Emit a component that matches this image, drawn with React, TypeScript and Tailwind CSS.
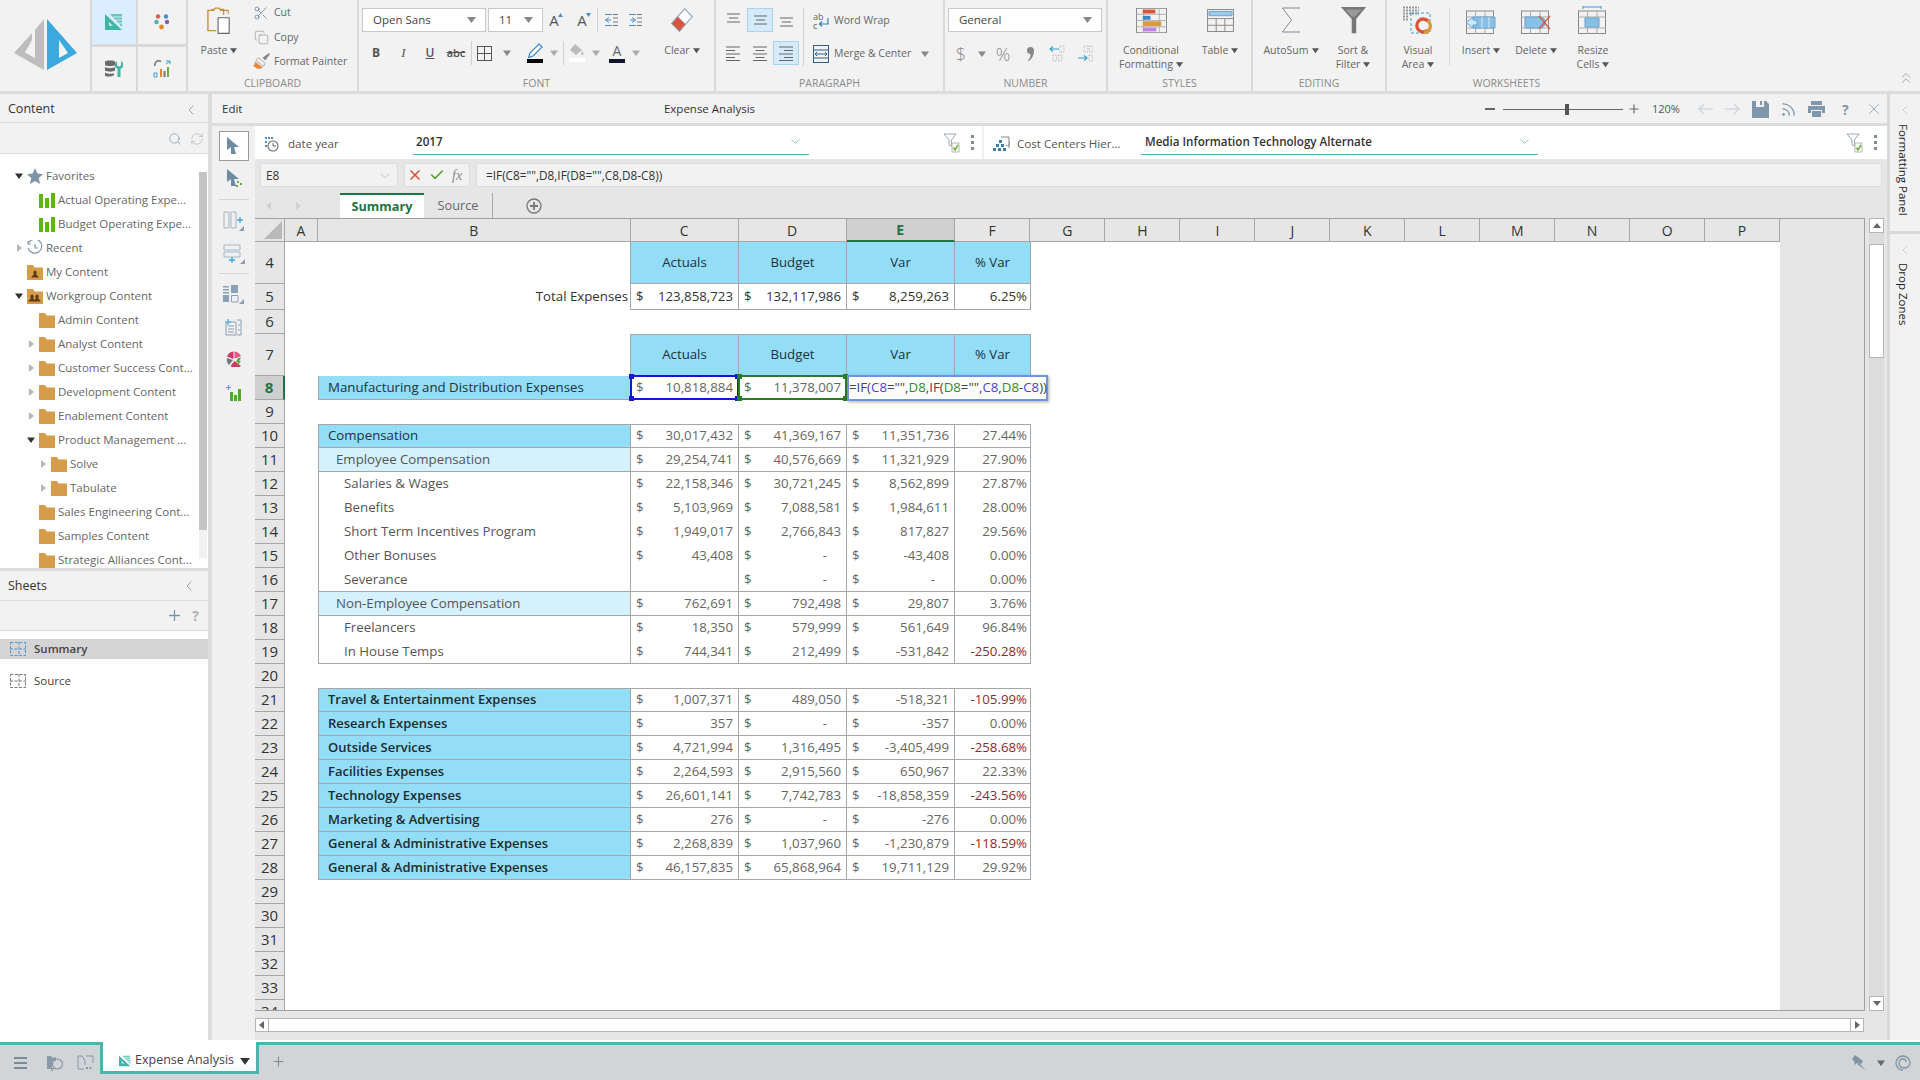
import { ReactNode } from 'react';
import { Check, ChevronDown, ChevronLeft, ChevronsUp, Copy, Plus, RefreshCw, Rss, Scissors, Search, X } from 'lucide-react';

// Tiny drawn icons, most of these don't exist in the icon packages
const Caret = ({ dir = 'down', c = 'text-[#666]', s = 8 }: { dir?: 'down' | 'right'; c?: string; s?: number }) => (
  <svg width={s} height={s} viewBox="0 0 8 8" className={`${c} fill-current`}>
    {dir === 'down' ? <path d="M0 1.5h8L4 7z" /> : <path d="M2 0l5 4-5 4z" />}
  </svg>
);

const Logo = () => (
  <svg width="90" height="91" viewBox="0 0 90 91">
    <path d="M44 19V70L14 53L32 33V40L25 52.5L35 58V30Z" fill="#bdbdbd" />
    <path fillRule="evenodd" d="M47 19L77 53L47 70ZM59 40V58L68 53Z" fill="#3aa9de" />
  </svg>
);

const TriangleRuler = ({ s = 18, bg = '#dbeeff' }: { s?: number; bg?: string }) => (
  <svg width={s} height={s} viewBox="0 0 18 18">
    <path d="M0 1L17 17H0Z" fill="#3fb5a5" />
    <path d="M5 1H17V14Z" fill="#3fb5a5" opacity=".75" />
    <path d="M4 12.5L4 9L8 13Z" fill={bg} />
    <path d="M8 4H17M10 7H17M13 10H17" stroke={bg} strokeWidth="1" />
  </svg>
);

const Dots = () => (
  <svg width="16" height="16" viewBox="0 0 16 16">
    <circle cx="4" cy="2.5" r="2.2" fill="#d9604c" />
    <circle cx="12" cy="2.5" r="2.2" fill="#4a90c8" />
    <circle cx="2.5" cy="8" r="2.2" fill="#4fb3a5" />
    <circle cx="13" cy="8" r="2.2" fill="#8a5bb8" />
    <circle cx="7.5" cy="13" r="2.4" fill="#e08a2c" />
  </svg>
);

const DataTool = () => (
  <svg width="18" height="18" viewBox="0 0 18 18">
    <path d="M0 1.5C0 0 10 0 10 1.5V5C10 6.5 0 6.5 0 5ZM0 7C2 8.5 8 8.5 10 7V10.500C8 12 2 12 0 10.500ZM0 12.500C2 14 6 14 9 13.500V15C7 17 0 17 0 15.500Z" fill="#6b6b6b" />
    <path d="M12 1V5.500L14 6.500L16 5.500V1L18 3V7L15.500 9V17H12.500V9L10 7V3Z" fill="#3fb5a5" />
  </svg>
);

const ReportTool = () => (
  <svg width="18" height="18" viewBox="0 0 18 18" fill="none">
    <path d="M8 1.500A4 4 0 0 0 2 6" stroke="#777" strokeWidth="1.600" />
    <path d="M13 1H17V4M13 4L17 1" stroke="#3a9fd0" strokeWidth="1" />
    <path d="M1 13H4V17H1Z" stroke="#3a9fd0" strokeWidth="1" />
    <path d="M7 9H9V17H7Z" fill="#e08a2c" />
    <path d="M10.500 11H12.500V17H10.500Z" fill="#777" />
    <path d="M14 7H16V17H14Z" fill="#6bb33a" />
  </svg>
);

const PasteIcon = () => (
  <svg width="24" height="27" viewBox="0 0 26 28" fill="none">
    <path d="M8 3H1V25H10" stroke="#c98e3f" strokeWidth="1.500" />
    <path d="M5 2H8L9 0.500H13L14 2H18V8" stroke="#c98e3f" strokeWidth="1.300" />
    <path d="M14 3H23V7" stroke="#c98e3f" strokeWidth="1.200" />
    <path d="M12 11H24V28H12Z" stroke="#666" strokeWidth="1.200" fill="#fff" />
  </svg>
);

const Brush = () => (
  <svg width="17" height="17" viewBox="0 0 18 18">
    <path d="M10 5L17 0L18 1L13 8Z" fill="#888" />
    <path d="M6 5L13 11L11 14L3 8Z" fill="#eee" stroke="#888" strokeWidth=".7" />
    <path d="M2 9L10 15C8 18 3 17 0 13C2 13 2 11 2 9Z" fill="#e08a3c" />
  </svg>
);

const AGrow = ({ up }: { up?: boolean }) => (
  <span className="relative text-[15px] text-[#555] leading-none font-medium">
    A
    <svg width="5" height="4" viewBox="0 0 5 4" className="absolute -right-[4px] top-0 fill-[#4a90c8]">
      {up ? <path d="M0 4L2.500 0L5 4Z" /> : <path d="M0 0H5L2.500 4Z" />}
    </svg>
  </span>
);

const IndentIcon = ({ left }: { left?: boolean }) => (
  <svg width="14" height="12" viewBox="0 0 14 12" fill="none" stroke="#4a90c8" strokeWidth="1">
    {left ? <path d="M5 3.500L1.500 6L5 8.500M1.500 6H7" /> : <path d="M4 3.500L7.500 6L4 8.500M2 6H7.500" />}
    <path d="M9 .5H14M9 4H14M9 8H14M9 11.500H14" stroke="#777" />
    <path d="M1 .5H8M1 11.500H8" stroke="#4a90c8" />
  </svg>
);

const BordersIcon = () => (
  <svg width="15" height="15" viewBox="0 0 15 15" fill="none" stroke="#555" strokeWidth="1">
    <rect x=".5" y=".5" width="14" height="14" />
    <path d="M7.500 0V15M0 7.500H15" />
  </svg>
);

const PenColor = () => (
  <svg width="17" height="20" viewBox="0 0 17 20">
    <path d="M12 1L15 4L6 13L1.500 14.500L3 10Z" fill="#fff" stroke="#3a86c8" strokeWidth="1.200" />
    <path d="M0 16H16V20H0Z" fill="#000" />
  </svg>
);

const FillColor = () => (
  <svg width="16" height="20" viewBox="0 0 16 20">
    <path d="M6 1L13 7L7 12L1 7Z" fill="#bbb" />
    <path d="M13 8C15 10 15 12 13.500 12C12 12 12 10 13 8Z" fill="#bbb" />
    <path d="M0 15H16V19H0Z" fill="#fff" />
  </svg>
);

const FontColor = () => (
  <span className="flex flex-col items-center leading-none">
    <span className="text-[14px] text-[#666]">A</span>
    <span className="w-[16px] h-[4px] bg-[#14142e] mt-[1px]" />
  </span>
);

const Eraser = () => (
  <svg width="24" height="24" viewBox="0 0 26 28">
    <path d="M16 1L25 10L10 27L1 18Z" fill="#fff" stroke="#8aa0b8" strokeWidth="1.200" />
    <path d="M8 10L17 19L10 27L1 18Z" fill="#d9553c" stroke="#8aa0b8" strokeWidth="1" />
  </svg>
);

const LinesIcon = ({ kind }: { kind: 'top' | 'mid' | 'bot' | 'left' | 'center' | 'right' }) => {
  const d = {
    top: 'M1 1H14M3 5H12M1 9H14',
    mid: 'M1 3H14M3 7H12M1 11H14',
    bot: 'M1 5H14M3 9H12M1 13H14',
    left: 'M0 1H14M0 4.500H9M0 8H14M0 11.500H9M0 14.500H14',
    center: 'M0 1H14M2.500 4.500H11.500M0 8H14M2.500 11.500H11.500M0 14.500H14',
    right: 'M0 1H14M5 4.500H14M0 8H14M5 11.500H14M0 14.500H14',
  }[kind];
  return (
    <svg width="15" height="15" viewBox="0 0 15 15" fill="none" stroke="#666" strokeWidth="1">
      <path d={d} />
    </svg>
  );
};

const WrapIcon = () => (
  <span className="relative w-[16px] h-[18px] block text-[9px] leading-[9px] text-[#666]">
    <span className="block w-[10px]">ab</span>
    <span className="block w-[6px]">c</span>
    <svg width="16" height="18" viewBox="0 0 16 18" className="absolute left-0 top-0">
      <path d="M15 6V12H7M9 9.500L6.500 12L9 14.500" fill="none" stroke="#2f7fb8" strokeWidth="1.200" />
    </svg>
  </span>
);

const MergeIcon = () => (
  <svg width="16" height="18" viewBox="0 0 16 18" fill="none" stroke="#2f5f8a" strokeWidth="1">
    <rect x=".5" y=".5" width="15" height="17" />
    <path d="M0 5H16M0 13H16M2 9H14M4 7L2 9L4 11M12 7L14 9L12 11" />
  </svg>
);

const DecIcon = ({ inc }: { inc?: boolean }) => (
  <svg width="16" height="18" viewBox="0 0 16 18" fill="none">
    <path d={inc ? 'M1 13H10M7 10.500L10 13L7 15.500' : 'M10 4H1M4 1.500L1 4L4 6.500'} stroke="#3a9fd0" strokeWidth="1.200" />
    <path d={inc ? 'M7 1H11V7H7ZM12.500 1H16V7H12.500ZM12 10H15.500V16H12Z' : 'M11 1H15V7H11ZM4 10H7.500V16H4ZM9.500 10H13V16H9.500Z'} stroke="#aaa" strokeWidth=".8" strokeDasharray="1 1" />
  </svg>
);

const CommaIcon = () => (
  <svg width="7" height="14" viewBox="0 0 7 14" className="fill-[#888]">
    <path d="M3.500 0A3.500 3.500 0 0 1 7 3.500C7 8 5 12 1.500 14L1 13C3 11.500 3.500 9.500 3.500 7A3.500 3.500 0 0 1 3.500 0Z" />
  </svg>
);

const CondFormat = () => (
  <svg width="31" height="25" viewBox="0 0 32 32" preserveAspectRatio="none" fill="none">
    <rect x=".5" y=".5" width="31" height="31" stroke="#888" />
    <path d="M0 8H32M0 16H32M0 24H32M8 0V32M24 0V32" stroke="#aaa" />
    <path d="M7 2H20V7H7Z" fill="#d9553c" />
    <path d="M7 10H15V15H7Z" fill="#3a86c8" />
    <path d="M7 17H26V23H7Z" fill="#d99a3c" />
    <path d="M7 25H21V30H7Z" fill="#c084e8" />
  </svg>
);

const TableIcon = () => (
  <svg width="27" height="23" viewBox="0 0 28 24" fill="none" stroke="#888">
    <rect x=".5" y=".5" width="27" height="23" />
    <path d="M2 2.500H26V7H2Z" fill="#9ec9e8" stroke="#6ba3cc" />
    <path d="M0 10H28M0 17H28M9.500 10V24M18.500 10V24" />
  </svg>
);

const Funnel = () => (
  <svg width="27" height="27" viewBox="0 0 30 34" preserveAspectRatio="none">
    <path d="M1 0H29L18 15V33H13V15Z" fill="#777" />
    <path d="M6 3H24L17 12H13Z" fill="#999" />
  </svg>
);

const SigmaIcon = () => (
  <svg width="20" height="26" viewBox="0 0 20 26" fill="none" stroke="#8a8a8a" strokeWidth="1">
    <path d="M19 1H1.500L10.500 13L1.500 25H19" />
  </svg>
);

const VisualArea = () => (
  <svg width="30" height="29" viewBox="0 0 30 29" fill="none">
    <path d="M0 1.500H16M0 4.500H16M0 7.500H16M0 10.500H5M0 13.500H5" stroke="#999" strokeWidth="2" strokeDasharray="2 1" />
    <path d="M8 7H27V27H8Z" stroke="#3a9fd0" strokeDasharray="3 2" />
    <path d="M25 24A6.500 6.500 0 1 1 25 15" stroke="#d9553c" strokeWidth="3.300" />
    <path d="M25 15A6.500 6.500 0 0 1 21 26.500" stroke="#d99a3c" strokeWidth="3.300" />
  </svg>
);

const GridBase = ({ children }: { children?: ReactNode }) => (
  <svg width="30" height="28" viewBox="0 0 30 28" fill="none">
    <rect x=".5" y="5" width="27" height="22.500" stroke="#888" />
    <path d="M0 11H28M0 22H28M9.500 5V28M19 5V28" stroke="#aaa" />
    {children}
  </svg>
);

const InsertIcon = () => (
  <GridBase>
    <path d="M7 11H29V22H7Z" fill="#88bfe6" stroke="#6ba3cc" />
    <path d="M16 11V22M23 11V22" stroke="#dbe9f5" />
    <path d="M7 11L0 16.500L7 22V19H11V14H7Z" fill="#cfe6f7" stroke="#5aa5d8" />
  </GridBase>
);

const DeleteIcon = () => (
  <GridBase>
    <path d="M4 11H19A5.500 5.500 0 0 1 19 22H4Z" fill="#88bfe6" stroke="#6ba3cc" />
    <path d="M18 10L29 23M29 10L18 23" stroke="#d9553c" strokeWidth="1.200" />
  </GridBase>
);

const ResizeIcon = () => (
  <GridBase>
    <path d="M5 1H23M5 0V3M23 0V3" stroke="#3a9fd0" />
    <path d="M7 12H21V21H7Z" fill="#88bfe6" stroke="#6ba3cc" />
  </GridBase>
);

const ToolPointer = ({ dots }: { dots?: boolean }) => (
  <svg width="16" height="20" viewBox="0 0 16 20">
    <path d="M1 1L13 11H8L10 18H5V11L1 14Z" fill="#6f8aa3" />
    {dots && <path d="M11 13h2v2h-2zM14 15h2v2h-2zM10 17h2v2h-2z" fill="#6aa84f" />}
  </svg>
);

const ColInsert = () => (
  <svg width="21" height="20" viewBox="0 0 21 20" fill="none">
    <path d="M1 1H6V17H1ZM8 1H13V17H8Z" stroke="#a5b5c5" />
    <path d="M14 9H20M17 6V12" stroke="#3aa9de" strokeWidth="1.300" />
    <path d="M21 20H16L21 15Z" fill="#8ba0b5" />
  </svg>
);

const RowInsert = () => (
  <svg width="22" height="20" viewBox="0 0 22 20" fill="none">
    <path d="M1 1H17V6H1ZM1 8H17V13H1Z" stroke="#a5b5c5" />
    <path d="M6 16H12M9 13V19" stroke="#3aa9de" strokeWidth="1.300" />
    <path d="M22 20H17L22 15Z" fill="#8ba0b5" />
  </svg>
);

const PanelsIcon = () => (
  <svg width="21" height="19" viewBox="0 0 21 19">
    <path d="M0 1H6V2.500H0ZM0 4H6V5.500H0ZM0 7H6V8.500H0ZM8 0H15V8H8ZM0 10H6V17H0Z" fill="#8ba0b5" />
    <path d="M8.500 10.500H15V17H8.500Z" fill="none" stroke="#8ba0b5" />
    <path d="M21 19H16L21 14Z" fill="#8ba0b5" />
  </svg>
);

const SheetAdd = () => (
  <svg width="17" height="17" viewBox="0 0 17 17" fill="none">
    <path d="M4 3H11V16H1V3M3 7H9M3 10H9M3 13H9" stroke="#8ba0b5" />
    <path d="M12 1H16V16H12M14 5V7M14 10V12" stroke="#8ba0b5" />
    <path d="M0 3H6M3 0V6" stroke="#3aa9de" strokeWidth="1.200" />
  </svg>
);

const PieTool = () => (
  <svg width="16" height="16" viewBox="0 0 16 16">
    <path d="M7.500 8L1 5.500A7.500 7.500 0 0 1 7.500 .5Z" fill="#d1386a" />
    <path d="M8.500 .5A7.500 7.500 0 0 1 15 5.500L8.500 7.500Z" fill="#e25a8a" />
    <path d="M1 7L7 9L3 14A7.500 7.500 0 0 1 1 7Z" fill="#777" />
    <path d="M4.500 15L8.500 10L15 15A8 8 0 0 1 4.500 15Z" fill="#d1386a" />
    <path d="M12 7L15 7L13 10H15L11 15L12 11H10Z" fill="#55a630" />
  </svg>
);

const ChartAdd = () => (
  <svg width="16" height="16" viewBox="0 0 16 16">
    <path d="M4 7H7V16H4ZM8 10H11V16H8ZM12 4H15V16H12Z" fill="#55a630" />
    <path d="M0 2.500H5M2.500 0V5" stroke="#3aa9de" strokeWidth="1.200" />
  </svg>
);

const DateIcon = () => (
  <svg width="14" height="16" viewBox="0 0 14 16" fill="none">
    <path d="M0 1H2V3H0ZM3 1H5V3H3ZM0 5H2V7H0ZM0 9H2V11H0ZM6 1H8V3H6Z" fill="#4a90c8" />
    <circle cx="8" cy="10" r="5" stroke="#666" strokeWidth="1.100" />
    <path d="M8 7V10H11" stroke="#666" />
  </svg>
);

const FilterCheck = () => (
  <svg width="17" height="20" viewBox="0 0 17 20" fill="none">
    <path d="M1 1H13L8.500 7V13L6 12V7Z" stroke="#9aa8b4" />
    <path d="M9 10H16V19H9Z" stroke="#b5b5b5" fill="#fff" />
    <path d="M10.500 14.500L12 17L15 12" stroke="#6db33f" strokeWidth="1.500" />
  </svg>
);

const VDots = () => (
  <span className="flex flex-col gap-[3px]">
    <span className="w-[3px] h-[3px] bg-[#7f8c99]" />
    <span className="w-[3px] h-[3px] bg-[#7f8c99]" />
    <span className="w-[3px] h-[3px] bg-[#7f8c99]" />
  </span>
);

const HierIcon = () => (
  <svg width="17" height="16" viewBox="0 0 17 16">
    <path d="M6 4h3v3H6zM3 8h3v3H3zM8 8h3v3H8zM0 12h3v3H0zM5 12h3v3H5zM10 12h3v3h-3z" fill="#3d7fa6" />
    <path d="M8 1H16V12" fill="none" stroke="#888" />
    <path d="M13 9A2 2 0 0 0 16 6" fill="none" stroke="#888" />
  </svg>
);

const SaveIcon = () => (
  <svg width="17" height="17" viewBox="0 0 17 17" className="fill-[#8096ad]">
    <path fillRule="evenodd" d="M0 0H14L17 3V17H0ZM4 0V6H12V0H10V4H8V0Z" />
  </svg>
);

const PrintIcon = () => (
  <svg width="17" height="16" viewBox="0 0 17 16" className="fill-[#8096ad]">
    <path d="M3 0H14V4H3ZM0 5H17V12H14V9H3V12H0ZM4 10H13V16H4Z" />
  </svg>
);

const ArrowIcon = ({ back }: { back?: boolean }) => (
  <svg width="15" height="12" viewBox="0 0 15 12" fill="none" stroke="#d3d8dd" strokeWidth="1.600">
    {back ? <path d="M15 6H1M6 1L1 6L6 11" /> : <path d="M0 6H14M9 1L14 6L9 11" />}
  </svg>
);

const Star = () => (
  <svg width="16" height="16" viewBox="0 0 16 16" className="fill-[#7f93a8]">
    <path d="M8 0L10.400 5.600L16 6.200L11.800 10L13 16L8 13L3 16L4.200 10L0 6.200L5.600 5.600Z" />
  </svg>
);

const Bars = () => (
  <svg width="16" height="15" viewBox="0 0 16 15" className="fill-[#5cb80f]">
    <path d="M0 1H4V15H0ZM6 5H10V15H6ZM12 0H16V15H12Z" />
  </svg>
);

const History = () => (
  <svg width="16" height="16" viewBox="0 0 16 16" fill="none" stroke="#8a97a4" strokeWidth="1.200">
    <path d="M1.500 3A7 7 0 1 1 1 8" />
    <path d="M1 1V4H4" />
    <path d="M8 4V8H11" />
  </svg>
);

const Folder = ({ people = 0 }: { people?: number }) => (
  <svg width="16" height="15" viewBox="0 0 16 15">
    <path d="M0 0H6L7.500 2.500H16V15H0Z" fill="#d59c4a" />
    {people >= 1 && <path d="M8 5.500A2 2 0 0 1 9 9L12 12.500H4L7 9A2 2 0 0 1 8 5.500Z" fill="#5f3a12" transform={people === 2 ? 'translate(-3 0)' : undefined} />}
    {people === 2 && <path d="M10 5.500A2 2 0 0 1 11 9L14 12.500H7L9 9A2 2 0 0 1 10 5.500Z" fill="#5f3a12" />}
  </svg>
);

const SheetDash = ({ blue }: { blue?: boolean }) => (
  <svg width="16" height="14" viewBox="0 0 16 14" fill="none" stroke={blue ? '#5a94c8' : '#777'} strokeDasharray="3 1.500">
    <rect x=".5" y=".5" width="15" height="13" />
    <path d="M0 7H16M9 0V14" />
  </svg>
);

const Spiral = () => (
  <svg width="16" height="16" viewBox="0 0 16 16" fill="none" stroke="#7f93a3" strokeWidth="1.300">
    <path d="M8 15A7 7 0 1 1 15 8C15 11 12 13 9 13A5 5 0 0 1 4 8A4 4 0 0 1 8 4A3 3 0 0 1 11 7" />
  </svg>
);

const Pin = () => (
  <svg width="16" height="16" viewBox="0 0 16 16" className="fill-[#7f93a3]">
    <path d="M4 0L12 6L10 9L6 8L4 10L3 6L1 4ZM6 9L15 15.500L8 8Z" />
  </svg>
);

const LibraryIcon = () => (
  <svg width="17" height="16" viewBox="0 0 17 16" fill="none">
    <path d="M0 1H4L5 2.500H9V6H5V14H0Z" fill="#8a97a4" />
    <circle cx="10.500" cy="9" r="5" stroke="#8a97a4" strokeWidth="1.200" />
    <path d="M7 13L4 16" stroke="#8a97a4" strokeWidth="1.500" />
  </svg>
);

const ViewIcon = () => (
  <svg width="17" height="15" viewBox="0 0 17 15" fill="none" stroke="#8a97a4">
    <path d="M9 1H16V8M7 14H1V1H5L8 6V10" />
    <path d="M9 13H11M12.500 13H14.500" strokeWidth="2" />
  </svg>
);

// Ribbon parts
function Group({ w, label, children }: { w: string; label: string; children: ReactNode }) {
  return (
    <div className={`${w} flex flex-col border-r-2 border-[#d9d9d9]`}>
      <div className="h-[74px] flex">{children}</div>
      <div className="h-[17px] text-center text-[10.500px] leading-[19px] text-[#8b8b8b]">{label}</div>
    </div>
  );
}

function BigBtn({ w, icon, lines }: { w: string; icon: ReactNode; lines: ReactNode[] }) {
  return (
    <div className={`${w} flex flex-col items-center`}>
      <div className="h-[40px] mb-[3px] flex items-center justify-center">{icon}</div>
      <div className="text-[10.500px] leading-[14px] text-[#666] text-center whitespace-nowrap">
        {lines.map((l, i) => (
          <div key={i} className="flex items-center justify-center gap-[3px]">
            {l}
          </div>
        ))}
      </div>
    </div>
  );
}

const WithCaret = ({ t }: { t: string }) => (
  <>
    {t} <Caret c="text-[#555]" s={7} />
  </>
);

const Combo = ({ w, text }: { w: string; text: string }) => (
  <div className={`${w} h-[24px] bg-white border border-[#c9c9c9] flex items-center justify-between pl-[10px] pr-[9px] text-[11.500px] text-[#444]`}>
    {text}
    <svg width="9" height="6" viewBox="0 0 9 6" className="fill-[#888]">
      <path d="M0 0H9L4.500 6Z" />
    </svg>
  </div>
);

const Slot = ({ w, children, active }: { w: string; children?: ReactNode; active?: boolean }) => (
  <div className={`${w} h-[24px] flex items-center justify-center ${active ? 'bg-[#d6ebfa] border border-[#a9d3f0]' : ''}`}>{children}</div>
);

const SmallCaret = () => <Caret c="text-[#888]" />;

function Ribbon() {
  return (
    <div className="h-[91px] bg-[#f2f2f2] flex shrink-0">
      <div className="w-[92px] border-r-2 border-[#d9d9d9]">
        <Logo />
      </div>
      <div className="w-[96px] grid grid-cols-[46px_48px] grid-rows-[44px_47px] border-r-2 border-[#d9d9d9]">
        <div className="bg-[#dbeeff] border-r-2 border-[#d9d9d9] flex items-center justify-center">
          <TriangleRuler />
        </div>
        <div className="flex items-center justify-center">
          <Dots />
        </div>
        <div className="border-r-2 border-t-[3px] border-[#d9d9d9] flex items-center justify-center">
          <DataTool />
        </div>
        <div className="border-t-[3px] border-[#d9d9d9] flex items-center justify-center">
          <ReportTool />
        </div>
      </div>

      <Group w="w-[171px]" label="CLIPBOARD">
        <div className="w-[62px] flex flex-col items-center">
          <div className="h-[40px] mb-[3px] flex items-center">
            <PasteIcon />
          </div>
          <span className="text-[10.500px] leading-[14px] text-[#666] flex items-center gap-[3px]">
            <WithCaret t="Paste" />
          </span>
        </div>
        <div className="flex flex-col pt-[1px] text-[10.500px] text-[#666]">
          {[
            { icon: <Scissors size={16} strokeWidth={1} className="text-[#4a6f9a]" />, t: 'Cut' },
            { icon: <Copy size={15} strokeWidth={1} className="text-[#888]" />, t: 'Copy' },
            { icon: <Brush />, t: 'Format Painter' },
          ].map((r) => (
            <div key={r.t} className="h-[25px] flex items-center">
              <span className="w-[22px] flex justify-center">{r.icon}</span>
              <span className="ml-[2px]">{r.t}</span>
            </div>
          ))}
        </div>
      </Group>

      <Group w="w-[357px]" label="FONT">
        <div className="w-[304px] pl-[3px] pt-[8px] flex flex-col">
          <div className="flex items-center">
            <Combo w="w-[124px]" text="Open Sans" />
            <div className="w-[2px]" />
            <Combo w="w-[55px]" text="11" />
            <Slot w="w-[22px]"><AGrow up /></Slot>
            <div className="w-[6px]" />
            <Slot w="w-[22px]"><AGrow /></Slot>
            <div className="w-[4px]" />
            <div className="w-px h-[24px] bg-[#d0d0d0]" />
            <Slot w="w-[25px]"><IndentIcon left /></Slot>
            <Slot w="w-[24px]"><IndentIcon /></Slot>
          </div>
          <div className="flex items-center mt-[9px] text-[#555]">
            <Slot w="w-[28px]"><b className="text-[12px]">B</b></Slot>
            <Slot w="w-[27px]"><i className="text-[13px] font-['Liberation_Serif']">I</i></Slot>
            <Slot w="w-[26px]"><u className="text-[12px] font-semibold">U</u></Slot>
            <Slot w="w-[26px]"><s className="text-[11px] font-semibold">abc</s></Slot>
            <div className="w-[2px]" />
            <div className="w-px h-[24px] bg-[#d0d0d0]" />
            <Slot w="w-[24px]"><BordersIcon /></Slot>
            <Slot w="w-[22px]"><SmallCaret /></Slot>
            <div className="w-[3px]" />
            <Slot w="w-[28px]"><PenColor /></Slot>
            <Slot w="w-[10px]"><Caret c="text-[#aaa]" /></Slot>
            <div className="w-[4px]" />
            <div className="w-px h-[24px] bg-[#d0d0d0]" />
            <Slot w="w-[26px]"><FillColor /></Slot>
            <Slot w="w-[12px]"><Caret c="text-[#aaa]" /></Slot>
            <Slot w="w-[30px]"><FontColor /></Slot>
            <Slot w="w-[8px]"><Caret c="text-[#aaa]" /></Slot>
          </div>
        </div>
        <BigBtn w="w-[38px]" icon={<Eraser />} lines={[<WithCaret key="c" t="Clear" />]} />
      </Group>

      <Group w="w-[229px]" label="PARAGRAPH">
        <div className="pl-[4px] pt-[8px] flex">
          <div className="grid grid-cols-[27px_26px_27px] gap-y-[9px] h-[57px]">
            <Slot w="w-[27px]"><LinesIcon kind="top" /></Slot>
            <Slot w="w-[26px]" active><LinesIcon kind="mid" /></Slot>
            <Slot w="w-[27px]"><LinesIcon kind="bot" /></Slot>
            <Slot w="w-[27px]"><LinesIcon kind="left" /></Slot>
            <Slot w="w-[26px]"><LinesIcon kind="center" /></Slot>
            <Slot w="w-[26px]" active><LinesIcon kind="right" /></Slot>
          </div>
          <div className="w-px h-[58px] bg-[#d0d0d0] ml-[3px]" />
          <div className="flex flex-col gap-[9px] pl-[9px] pt-[1px] text-[10.500px] text-[#666]">
            <div className="h-[24px] flex items-center gap-[5px]">
              <WrapIcon />
              <span>Word Wrap</span>
            </div>
            <div className="h-[24px] flex items-center gap-[5px]">
              <MergeIcon />
              <span>Merge &amp; Center</span>
              <span className="ml-[5px]"><SmallCaret /></span>
            </div>
          </div>
        </div>
      </Group>

      <Group w="w-[163px]" label="NUMBER">
        <div className="pl-[3px] pt-[8px] flex flex-col">
          <Combo w="w-[154px]" text="General" />
          <div className="flex mt-[10px] text-[#888]">
            <Slot w="w-[26px]"><span className="text-[18px] font-light">$</span></Slot>
            <Slot w="w-[16px]"><SmallCaret /></Slot>
            <Slot w="w-[26px]"><span className="text-[18px] font-light">%</span></Slot>
            <Slot w="w-[28px]"><CommaIcon /></Slot>
            <Slot w="w-[26px]"><DecIcon /></Slot>
            <Slot w="w-[30px]"><DecIcon inc /></Slot>
          </div>
        </div>
      </Group>

      <Group w="w-[145px]" label="STYLES">
        <BigBtn w="w-[86px]" icon={<CondFormat />} lines={['Conditional', <WithCaret key="f" t="Formatting" />]} />
        <BigBtn w="w-[52px]" icon={<TableIcon />} lines={[<WithCaret key="t" t="Table" />]} />
      </Group>

      <Group w="w-[134px]" label="EDITING">
        <BigBtn w="w-[76px]" icon={<SigmaIcon />} lines={[<WithCaret key="a" t="AutoSum" />]} />
        <BigBtn w="w-[48px]" icon={<Funnel />} lines={['Sort &', <WithCaret key="s" t="Filter" />]} />
      </Group>

      <div className="flex-1 flex">
        <div className="w-[239px] flex flex-col">
          <div className="h-[74px] flex">
            <BigBtn w="w-[62px]" icon={<VisualArea />} lines={['Visual', <WithCaret key="v" t="Area" />]} />
            <div className="w-px h-[58px] mt-[8px] bg-[#d8d8d8]" />
            <BigBtn w="w-[62px]" icon={<InsertIcon />} lines={[<WithCaret key="i" t="Insert" />]} />
            <BigBtn w="w-[48px]" icon={<DeleteIcon />} lines={[<WithCaret key="d" t="Delete" />]} />
            <BigBtn w="w-[66px]" icon={<ResizeIcon />} lines={['Resize', <WithCaret key="r" t="Cells" />]} />
          </div>
          <div className="h-[17px] text-center text-[10.500px] leading-[19px] text-[#8b8b8b]">WORKSHEETS</div>
        </div>
        <div className="flex-1 flex items-end justify-end pr-[5px] pb-[4px]">
          <ChevronsUp size={18} strokeWidth={1} className="text-[#8a97a4]" />
        </div>
      </div>
    </div>
  );
}

// Left panels
type TreeItem = { t: string; lvl: 0 | 1 | 2; arrow?: 'open' | 'closed'; icon: ReactNode };

const treeItems: TreeItem[] = [
  { t: 'Favorites', lvl: 0, arrow: 'open', icon: <Star /> },
  { t: 'Actual Operating Expe...', lvl: 1, icon: <Bars /> },
  { t: 'Budget Operating Expe...', lvl: 1, icon: <Bars /> },
  { t: 'Recent', lvl: 0, arrow: 'closed', icon: <History /> },
  { t: 'My Content', lvl: 0, icon: <Folder people={1} /> },
  { t: 'Workgroup Content', lvl: 0, arrow: 'open', icon: <Folder people={2} /> },
  { t: 'Admin Content', lvl: 1, icon: <Folder /> },
  { t: 'Analyst Content', lvl: 1, arrow: 'closed', icon: <Folder /> },
  { t: 'Customer Success Cont...', lvl: 1, arrow: 'closed', icon: <Folder /> },
  { t: 'Development Content', lvl: 1, arrow: 'closed', icon: <Folder /> },
  { t: 'Enablement Content', lvl: 1, arrow: 'closed', icon: <Folder /> },
  { t: 'Product Management ...', lvl: 1, arrow: 'open', icon: <Folder /> },
  { t: 'Solve', lvl: 2, arrow: 'closed', icon: <Folder /> },
  { t: 'Tabulate', lvl: 2, arrow: 'closed', icon: <Folder /> },
  { t: 'Sales Engineering Cont...', lvl: 1, icon: <Folder /> },
  { t: 'Samples Content', lvl: 1, icon: <Folder /> },
  { t: 'Strategic Alliances Cont...', lvl: 1, icon: <Folder /> },
];

function TreeRow({ item }: { item: TreeItem }) {
  const indent = item.lvl === 0 ? 'pl-[15px]' : item.lvl === 1 ? 'pl-[27px]' : 'pl-[39px]';
  return (
    <div className={`h-[24px] flex items-center ${indent} text-[11.500px] text-[#666] whitespace-nowrap`}>
      <span className="w-[12px] flex justify-start">
        {item.arrow === 'open' && <Caret c="text-[#333]" />}
        {item.arrow === 'closed' && <Caret dir="right" c="text-[#b0b8bf]" />}
      </span>
      <span className="w-[16px] flex justify-center">{item.icon}</span>
      <span className="ml-[3px]">{item.t}</span>
    </div>
  );
}

function LeftPanels() {
  return (
    <div className="w-[212px] shrink-0 flex flex-col bg-white border-r-4 border-[#dcdcdc]">
      <div className="h-[474px] flex flex-col shrink-0">
        <div className="h-[29px] bg-[#f2f2f2] border-b border-[#dcdcdc] flex items-center justify-between pl-[8px] pr-[9px] pt-[3px] text-[12.500px] text-[#333] shrink-0">
          Content
          <ChevronLeft size={16} strokeWidth={1} className="text-[#777]" />
        </div>
        <div className="h-[31px] bg-[#f2f2f2] border-b border-[#dcdcdc] flex items-center justify-end gap-[8px] pr-[4px] pt-[1px] shrink-0">
          <Search size={14} strokeWidth={1.300} className="text-[#8a97a4]" />
          <RefreshCw size={14} strokeWidth={1.100} className="text-[#a9b3bc]" />
        </div>
        <div className="flex-1 flex overflow-hidden">
          <div className="flex-1 pt-[10px] overflow-hidden">
            {treeItems.map((i) => (
              <TreeRow key={i.t} item={i} />
            ))}
          </div>
          <div className="w-[8px] mr-[1px] mt-[18px] mb-[10px] bg-[#f1f1f1]">
            <div className="h-[358px] bg-[#c4c4c4]" />
          </div>
        </div>
      </div>
      <div className="h-[3px] bg-[#dcdcdc] shrink-0" />
      <div className="h-[30px] bg-[#f2f2f2] border-b border-[#dcdcdc] flex items-center justify-between pl-[8px] pr-[11px] pt-[1px] text-[12.500px] text-[#333] shrink-0">
        Sheets
        <ChevronLeft size={16} strokeWidth={1} className="text-[#777]" />
      </div>
      <div className="h-[30px] bg-[#f2f2f2] border-b border-[#dcdcdc] flex items-center justify-end gap-[9px] pr-[9px] shrink-0">
        <Plus size={17} strokeWidth={1.800} className="text-[#7f93a8]" />
        <span className="text-[14px] font-bold text-[#a9b3bc]">?</span>
      </div>
      <div className="pt-[8px]">
        <div className="h-[20px] bg-[#d5d5d5] flex items-center pl-[10px] text-[11.500px] font-semibold text-[#444]">
          <SheetDash blue />
          <span className="ml-[8px]">Summary</span>
        </div>
        <div className="h-[20px] mt-[12px] flex items-center pl-[10px] text-[11.500px] text-[#444]">
          <SheetDash />
          <span className="ml-[8px]">Source</span>
        </div>
      </div>
    </div>
  );
}

function ToolColumn() {
  return (
    <div className="w-[43px] shrink-0 bg-[#f0f0f0] flex flex-col items-center pt-[5px]">
      <div className="w-[30px] h-[30px] bg-white border border-[#9a9a9a] flex items-center justify-center">
        <ToolPointer />
      </div>
      <div className="h-[34px] flex items-center justify-center mt-[0px]">
        <ToolPointer dots />
      </div>
      <div className="w-[30px] h-px bg-[#d4d4d4] mt-[4px]" />
      <div className="h-[42px] flex items-center justify-center">
        <ColInsert />
      </div>
      <div className="h-[24px] flex items-center justify-center">
        <RowInsert />
      </div>
      <div className="w-[30px] h-px bg-[#d4d4d4] mt-[7px]" />
      <div className="h-[40px] flex items-center justify-center">
        <PanelsIcon />
      </div>
      <div className="h-[27px] flex items-center justify-center">
        <SheetAdd />
      </div>
      <div className="h-[36px] flex items-center justify-center">
        <PieTool />
      </div>
      <div className="h-[32px] flex items-center justify-center">
        <ChartAdd />
      </div>
    </div>
  );
}

// Sheet data
type Kind = 'blank' | 'head' | 'total' | 'sel' | 'group' | 'sub' | 'item';
type SheetRow = { n: number; h?: string; kind: Kind; label?: string; v?: (string | null)[]; top?: boolean; bottom?: boolean };

const H = ['Actuals', 'Budget', 'Var', '% Var'];

const sheetRows: SheetRow[] = [
  { n: 4, h: 'h-[42px]', kind: 'head' },
  { n: 5, h: 'h-[26px]', kind: 'total', label: 'Total Expenses', v: ['123,858,723', '132,117,986', '8,259,263', '6.25%'] },
  { n: 6, h: 'h-[24px]', kind: 'blank' },
  { n: 7, h: 'h-[42px]', kind: 'head', top: true },
  { n: 8, kind: 'sel', label: 'Manufacturing and Distribution Expenses', v: ['10,818,884', '11,378,007', '', ''] },
  { n: 9, kind: 'blank' },
  { n: 10, kind: 'group', top: true, label: 'Compensation', v: ['30,017,432', '41,369,167', '11,351,736', '27.44%'] },
  { n: 11, kind: 'sub', bottom: true, label: 'Employee Compensation', v: ['29,254,741', '40,576,669', '11,321,929', '27.90%'] },
  { n: 12, kind: 'item', label: 'Salaries & Wages', v: ['22,158,346', '30,721,245', '8,562,899', '27.87%'] },
  { n: 13, kind: 'item', label: 'Benefits', v: ['5,103,969', '7,088,581', '1,984,611', '28.00%'] },
  { n: 14, kind: 'item', label: 'Short Term Incentives Program', v: ['1,949,017', '2,766,843', '817,827', '29.56%'] },
  { n: 15, kind: 'item', label: 'Other Bonuses', v: ['43,408', '-', '-43,408', '0.00%'] },
  { n: 16, kind: 'item', bottom: true, label: 'Severance', v: [null, '-', '-', '0.00%'] },
  { n: 17, kind: 'sub', bottom: true, label: 'Non-Employee Compensation', v: ['762,691', '792,498', '29,807', '3.76%'] },
  { n: 18, kind: 'item', label: 'Freelancers', v: ['18,350', '579,999', '561,649', '96.84%'] },
  { n: 19, kind: 'item', bottom: true, label: 'In House Temps', v: ['744,341', '212,499', '-531,842', '-250.28%'] },
  { n: 20, kind: 'blank' },
  { n: 21, kind: 'group', top: true, label: 'Travel & Entertainment Expenses', v: ['1,007,371', '489,050', '-518,321', '-105.99%'] },
  { n: 22, kind: 'group', label: 'Research Expenses', v: ['357', '-', '-357', '0.00%'] },
  { n: 23, kind: 'group', label: 'Outside Services', v: ['4,721,994', '1,316,495', '-3,405,499', '-258.68%'] },
  { n: 24, kind: 'group', label: 'Facilities Expenses', v: ['2,264,593', '2,915,560', '650,967', '22.33%'] },
  { n: 25, kind: 'group', label: 'Technology Expenses', v: ['26,601,141', '7,742,783', '-18,858,359', '-243.56%'] },
  { n: 26, kind: 'group', label: 'Marketing & Advertising', v: ['276', '-', '-276', '0.00%'] },
  { n: 27, kind: 'group', label: 'General & Administrative Expenses', v: ['2,268,839', '1,037,960', '-1,230,879', '-118.59%'] },
  { n: 28, kind: 'group', label: 'General & Administrative Expenses', v: ['46,157,835', '65,868,964', '19,711,129', '29.92%'] },
  { n: 29, kind: 'blank' },
  { n: 30, kind: 'blank' },
  { n: 31, kind: 'blank' },
  { n: 32, kind: 'blank' },
  { n: 33, kind: 'blank' },
  { n: 34, kind: 'blank' },
];

const colLetters = ['G', 'H', 'I', 'J', 'K', 'L', 'M', 'N', 'O', 'P'];

function ColHeaders() {
  const cell = 'border-r border-b border-[#a6a6a6] flex items-center justify-center';
  return (
    <div className="flex h-[23px] text-[14px] text-[#333] shrink-0">
      <div className={`w-[30px] ${cell} relative`}>
        <svg width="18" height="18" viewBox="0 0 18 18" className="absolute right-[2px] bottom-[2px] fill-[#b9b9b9]">
          <path d="M18 0V18H0Z" />
        </svg>
      </div>
      <div className={`w-[33px] ${cell}`}>A</div>
      <div className={`w-[313px] ${cell}`}>B</div>
      <div className={`w-[108px] ${cell}`}>C</div>
      <div className={`w-[108px] ${cell}`}>D</div>
      <div className="w-[108px] border-r border-[#a6a6a6] border-b-2 border-b-[#217346] bg-[#cfcfcf] flex items-center justify-center font-bold text-[#217346]">E</div>
      <div className={`w-[76px] ${cell}`}>F</div>
      {colLetters.map((c) => (
        <div key={c} className={`w-[75px] ${cell}`}>
          {c}
        </div>
      ))}
    </div>
  );
}

function Money({ v, tone, w, top, bottom, children }: { v?: string | null; tone: string; w: string; top?: boolean; bottom?: boolean; children?: ReactNode }) {
  return (
    <div className={`${w} relative flex items-center justify-between pl-[5px] border-r border-[#a6a6a6] bg-white ${top ? 'border-t' : ''} ${bottom ? 'border-b' : ''} ${v === '-' ? 'pr-[19px]' : 'pr-[5px]'} ${tone}`}>
      {v !== null && v !== '' && v !== undefined && (
        <>
          <span>$</span>
          <span>{v}</span>
        </>
      )}
      {children}
    </div>
  );
}

function Percent({ v, tone, top, bottom }: { v?: string | null; tone: string; top?: boolean; bottom?: boolean }) {
  const red = v?.startsWith('-');
  return (
    <div className={`w-[76px] flex items-center justify-end pr-[3px] border-r border-[#a6a6a6] bg-white ${top ? 'border-t' : ''} ${bottom ? 'border-b' : ''} ${red ? 'text-[#8e2a32]' : tone}`}>{v}</div>
  );
}

const Handles = ({ c }: { c: string }) => (
  <>
    <span className={`absolute -left-[3px] -top-[3px] w-[5px] h-[5px] ${c}`} />
    <span className={`absolute -right-[3px] -top-[3px] w-[5px] h-[5px] ${c}`} />
    <span className={`absolute -left-[3px] -bottom-[3px] w-[5px] h-[5px] ${c}`} />
    <span className={`absolute -right-[3px] -bottom-[3px] w-[5px] h-[5px] ${c}`} />
  </>
);

const FormulaEditor = () => (
  <div className="absolute left-0 -top-[1px] z-10 w-[201px] h-[26px] bg-white border-2 border-[#6d94e0] shadow-[1px_1px_3px_rgba(0,0,0,0.35)] flex items-center text-[13.250px] text-[#444] whitespace-nowrap">
    =IF(<span className="text-[#4b3fd0]">C8</span>="",<span className="text-[#2e8b22]">D8</span>,IF(<span className="text-[#2e8b22]">D8</span>="",<span className="text-[#4b3fd0]">C8</span>,<span className="text-[#2e8b22]">D8</span>-<span className="text-[#4b3fd0]">C8</span>))
  </div>
);

function RowView({ row }: { row: SheetRow }) {
  const sel = row.n === 8;
  const h = row.h ?? 'h-[24px]';
  const hd = row.kind === 'head';
  const top = row.top;
  const bottom = row.bottom || row.kind === 'group' || row.kind === 'sel' || row.kind === 'total';
  const tone = row.kind === 'total' ? 'text-[#333]' : 'text-[#666]';
  // the lower block of labels reads heavier than the ones above it
  const labelWeight = row.n >= 21 ? 'font-semibold text-[13px] text-[#1d2a31]' : 'font-medium text-[#22313a]';
  return (
    <div className={`flex ${h} shrink-0 text-[13.250px]`}>
      {sel ? (
        <div className="w-[30px] bg-[#cfcfcf] border-b border-[#a6a6a6] border-r-2 border-r-[#217346] flex items-center justify-center text-[15px] font-bold text-[#217346]">{row.n}</div>
      ) : (
        <div className="w-[30px] bg-[#e6e6e6] border-r border-b border-[#a6a6a6] flex items-center justify-center text-[15px] text-[#333]">{row.n}</div>
      )}
      <div className="w-[33px] bg-white" />
      {row.kind === 'blank' && <div className="w-[313px] bg-white" />}
      {hd && <div className="w-[313px] bg-white border-r border-[#a6a6a6]" />}
      {row.kind === 'total' && <div className="w-[313px] bg-white border-r border-[#a6a6a6] flex items-center justify-end pr-[2px] text-[#333] font-medium">{row.label}</div>}
      {(row.kind === 'group' || row.kind === 'sel') && (
        <div className={`w-[313px] bg-[#93ddf7] border-l border-r border-[#a6a6a6] flex items-center pl-[9px] ${labelWeight} ${top ? 'border-t' : ''} ${bottom ? 'border-b' : ''}`}>{row.label}</div>
      )}
      {row.kind === 'sub' && <div className={`w-[313px] bg-[#d4f1fc] border-l border-r border-[#a6a6a6] flex items-center pl-[17px] text-[#555] ${bottom ? 'border-b' : ''}`}>{row.label}</div>}
      {row.kind === 'item' && <div className={`w-[313px] bg-white border-l border-r border-[#a6a6a6] flex items-center pl-[25px] text-[#555] ${bottom ? 'border-b' : ''}`}>{row.label}</div>}

      {hd &&
        H.map((t, i) => (
          <div key={t} className={`${i === 3 ? 'w-[76px]' : 'w-[108px]'} bg-[#93ddf7] border-r border-b border-[#a6a6a6] flex items-center justify-center text-[#22313a] font-medium ${top ? 'border-t' : ''}`}>
            {t}
          </div>
        ))}
      {row.v && row.n !== 8 && (
        <>
          <Money w="w-[108px]" v={row.v[0]} tone={tone} top={top} bottom={bottom} />
          <Money w="w-[108px]" v={row.v[1]} tone={tone} top={top} bottom={bottom} />
          <Money w="w-[108px]" v={row.v[2]} tone={tone} top={top} bottom={bottom} />
          <Percent v={row.v[3]} tone={tone} top={top} bottom={bottom} />
        </>
      )}
      {sel && row.v && (
        <>
          <Money w="w-[108px]" v={row.v[0]} tone={tone} bottom>
            <span className="absolute -left-px -top-px -right-px -bottom-px border-2 border-[#1616d4]">
              <Handles c="bg-[#1616d4]" />
            </span>
          </Money>
          <Money w="w-[108px]" v={row.v[1]} tone={tone} bottom>
            <span className="absolute -left-px -top-px -right-px -bottom-px border-2 border-[#2a7d1e]">
              <Handles c="bg-[#2a7d1e]" />
            </span>
          </Money>
          <Money w="w-[108px]" tone={tone} bottom>
            <FormulaEditor />
          </Money>
          <Percent tone={tone} bottom />
        </>
      )}
      {row.kind === 'blank' && <div className="w-[400px] bg-white" />}
      <div className="flex-1 bg-white" />
    </div>
  );
}

function Sheet() {
  return (
    <div className="flex h-[793px]">
      <div className="w-[1610px] bg-[#e6e6e6] border-t border-r border-b border-[#a0a0a0] overflow-hidden flex flex-col">
        <div className="w-[1525px] flex flex-col">
          <ColHeaders />
          {sheetRows.map((r) => (
            <RowView key={r.n} row={r} />
          ))}
        </div>
      </div>
      <div className="w-[15px] ml-[4px] flex flex-col bg-[#dcdcdc]">
        <div className="h-[15px] bg-white border border-[#b5b5b5] flex items-center justify-center">
          <svg width="8" height="5" viewBox="0 0 8 5" className="fill-[#666]"><path d="M0 5L4 0L8 5Z" /></svg>
        </div>
        <div className="h-[114px] mt-[11px] bg-white border border-[#b5b5b5]" />
        <div className="flex-1" />
        <div className="h-[15px] bg-white border border-[#b5b5b5] flex items-center justify-center">
          <svg width="8" height="5" viewBox="0 0 8 5" className="fill-[#666]"><path d="M0 0L4 5L8 0Z" /></svg>
        </div>
      </div>
    </div>
  );
}

function WorkArea() {
  return (
    <div className="flex-1 bg-[#e6e6e6] flex flex-col min-w-0">
      {/* Filters */}
      <div className="h-[33px] bg-white flex items-center text-[11.600px] shrink-0">
        <div className="w-[729px] flex items-center h-full border-r-2 border-[#f0f0f0]">
          <span className="ml-[10px] mt-[3px] w-[14px] flex"><DateIcon /></span>
          <span className="ml-[9px] mt-[3px] w-[125px] text-[#555]">date year</span>
          <div className="w-[396px] h-[26px] -mt-[1px] flex items-center justify-between border-b border-[#5aa9c4] pl-[3px] pr-[6px] font-semibold text-[#333]">
            2017
            <ChevronDown size={15} strokeWidth={1} className="text-[#3d9dc4]" />
          </div>
          <span className="ml-[134px] flex"><FilterCheck /></span>
          <span className="ml-[11px] flex"><VDots /></span>
        </div>
        <span className="ml-[9px] mt-[3px] flex"><HierIcon /></span>
        <span className="ml-[7px] mt-[3px] w-[124px] text-[#555]">Cost Centers Hier...</span>
        <div className="w-[397px] h-[26px] -mt-[1px] flex items-center justify-between border-b border-[#5aa9c4] pl-[4px] pr-[6px] font-semibold text-[#333]">
          Media Information Technology Alternate
          <ChevronDown size={15} strokeWidth={1} className="text-[#3d9dc4]" />
        </div>
        <span className="ml-[308px] flex"><FilterCheck /></span>
        <span className="ml-[11px] flex"><VDots /></span>
      </div>

      {/* Formula bar */}
      <div className="flex h-[24px] mt-[4px] ml-[5px] mr-[5px] gap-[6px] text-[11.800px] text-[#333] shrink-0">
        <div className="w-[138px] bg-[#f2f2f2] border border-[#dcdcdc] rounded-[2px] flex items-center justify-between pl-[5px] pr-[5px] pt-[1px]">
          E8
          <ChevronDown size={14} strokeWidth={1} className="text-[#999]" />
        </div>
        <div className="w-[66px] bg-[#f2f2f2] border border-[#dcdcdc] rounded-[2px] flex items-center pl-[2px]">
          <X size={16} strokeWidth={2.500} className="text-[#d9553c]" />
          <Check size={16} strokeWidth={2.500} className="ml-[6px] text-[#55a630]" />
          <i className="ml-[7px] font-['Liberation_Serif'] text-[14px] text-[#888]">fx</i>
        </div>
        <div className="flex-1 bg-[#f2f2f2] border border-[#dcdcdc] rounded-[2px] flex items-center pl-[9px] pt-[1px]">=IF(C8="",D8,IF(D8="",C8,D8-C8))</div>
      </div>

      {/* Sheet tabs */}
      <div className="flex h-[25px] mt-[6px] items-center text-[12.700px] shrink-0">
        <span className="ml-[10px] w-[29px] flex"><Caret dir="right" c="text-[#d0d0d0] rotate-180" /></span>
        <span className="w-[46px] flex"><Caret dir="right" c="text-[#d0d0d0]" /></span>
        <div className="w-[84px] h-[25px] bg-white border-t-2 border-[#217346] flex items-center justify-center font-bold text-[#217346]">Summary</div>
        <div className="w-[69px] h-[25px] border-r border-[#aaa] flex items-center justify-center text-[#666]">Source</div>
        <div className="h-[25px] flex items-center ml-[33px]">
          <svg width="16" height="16" viewBox="0 0 16 16" fill="none" stroke="#777" strokeWidth="1.300">
            <circle cx="8" cy="8" r="7" />
            <path d="M8 4V12M4 8H12" strokeWidth="1.800" />
          </svg>
        </div>
      </div>

      <Sheet />

      {/* Horizontal scroll */}
      <div className="w-[1609px] h-[14px] mt-[7px] flex">
        <div className="w-[14px] bg-white border border-[#b5b5b5] flex items-center justify-center">
          <Caret dir="right" c="text-[#666] rotate-180" />
        </div>
        <div className="flex-1 bg-white border-y border-[#b5b5b5]" />
        <div className="w-[14px] bg-white border border-[#b5b5b5] flex items-center justify-center">
          <Caret dir="right" />
        </div>
      </div>
    </div>
  );
}

function TitleBar() {
  return (
    <div className="h-[29px] bg-[#f2f2f2] flex items-center pt-[1px] text-[11.500px] text-[#333] shrink-0">
      <span className="ml-[10px] w-[340px]">Edit</span>
      <span className="w-[295px] font-medium text-center">Expense Analysis</span>
      <div className="ml-[628px] flex items-center">
        <span className="w-[10px] h-[2px] bg-[#666]" />
        <div className="ml-[8px] w-[120px] h-px bg-[#666] relative">
          <span className="absolute left-[62px] -top-[5px] w-[4px] h-[11px] bg-[#555]" />
        </div>
        <Plus size={14} strokeWidth={2} className="ml-[4px] text-[#666]" />
        <span className="ml-[11px] text-[11px] text-[#555]">120%</span>
        <span className="ml-[18px] flex"><ArrowIcon back /></span>
        <span className="ml-[12px] flex"><ArrowIcon /></span>
        <span className="ml-[12px] flex"><SaveIcon /></span>
        <span className="ml-[11px] flex"><Rss size={17} strokeWidth={1.800} className="text-[#8096ad]" /></span>
        <span className="ml-[11px] flex"><PrintIcon /></span>
        <span className="ml-[17px] text-[14px] font-bold text-[#8096ad]">?</span>
        <X size={18} strokeWidth={1} className="ml-[16px] text-[#8096ad]" />
      </div>
    </div>
  );
}

function RightPanel() {
  const vertical = '[writing-mode:vertical-rl] text-[11.500px] text-[#222] mr-[3px]';
  return (
    <div className="w-[33px] shrink-0 border-l-[3px] border-[#d9d9d9] bg-[#f2f2f2] flex flex-col items-center">
      <ChevronLeft size={16} strokeWidth={1} className="mt-[8px] text-[#bbb]" />
      <span className={`mt-[6px] ${vertical}`}>Formatting Panel</span>
      <div className="w-full h-[3px] bg-[#d9d9d9] mt-[15px]" />
      <ChevronLeft size={16} strokeWidth={1} className="mt-[8px] text-[#bbb]" />
      <span className={`mt-[5px] ${vertical}`}>Drop Zones</span>
    </div>
  );
}

function BottomBar() {
  return (
    <div className="h-[40px] flex flex-col bg-white shrink-0">
      <div className="h-[3px]" />
      <div className="flex-1 flex bg-[#d1d5d8] border-t-[3px] border-[#4cb5ab] -mt-px">
        <div className="w-[100px] flex items-center">
          <div className="ml-[14px] w-[13px] flex flex-col gap-[3px]">
            <span className="h-[2px] bg-[#7b8a99]" />
            <span className="h-[2px] bg-[#7b8a99]" />
            <span className="h-[2px] bg-[#7b8a99]" />
          </div>
          <span className="ml-[20px] flex"><LibraryIcon /></span>
          <span className="ml-[13px] flex"><ViewIcon /></span>
        </div>
        <div className="w-[159px] h-[32px] -mt-[3px] bg-white border-x-[3px] border-b-[3px] border-[#4cb5ab] flex items-center pl-[16px] pt-[8px] text-[12.500px] text-[#444]">
          <TriangleRuler s={12} bg="#ffffff" />
          <span className="ml-[4px] whitespace-nowrap">Expense Analysis</span>
          <span className="ml-[6px] flex"><Caret c="text-[#333]" s={10} /></span>
        </div>
        <Plus size={15} strokeWidth={1.800} className="ml-[12px] mt-[9px] text-[#7b8a99]" />
        <div className="flex-1 flex items-center justify-end pr-[9px] gap-[10px]">
          <Pin />
          <Caret />
          <Spiral />
        </div>
      </div>
    </div>
  );
}

export default function App() {
  return (
    <div className="w-[1920px] h-[1080px] overflow-hidden flex flex-col bg-white font-['Open_Sans',sans-serif]">
      <Ribbon />
      <div className="h-[3px] bg-[#dcdcdc] shrink-0" />
      <div className="flex-1 flex min-h-0">
        <LeftPanels />
        <div className="flex-1 flex flex-col min-w-0">
          <TitleBar />
          <div className="h-[3px] bg-[#dcdcdc] shrink-0" />
          <div className="flex-1 flex min-h-0">
            <ToolColumn />
            <WorkArea />
          </div>
        </div>
        <RightPanel />
      </div>
      <BottomBar />
    </div>
  );
}
